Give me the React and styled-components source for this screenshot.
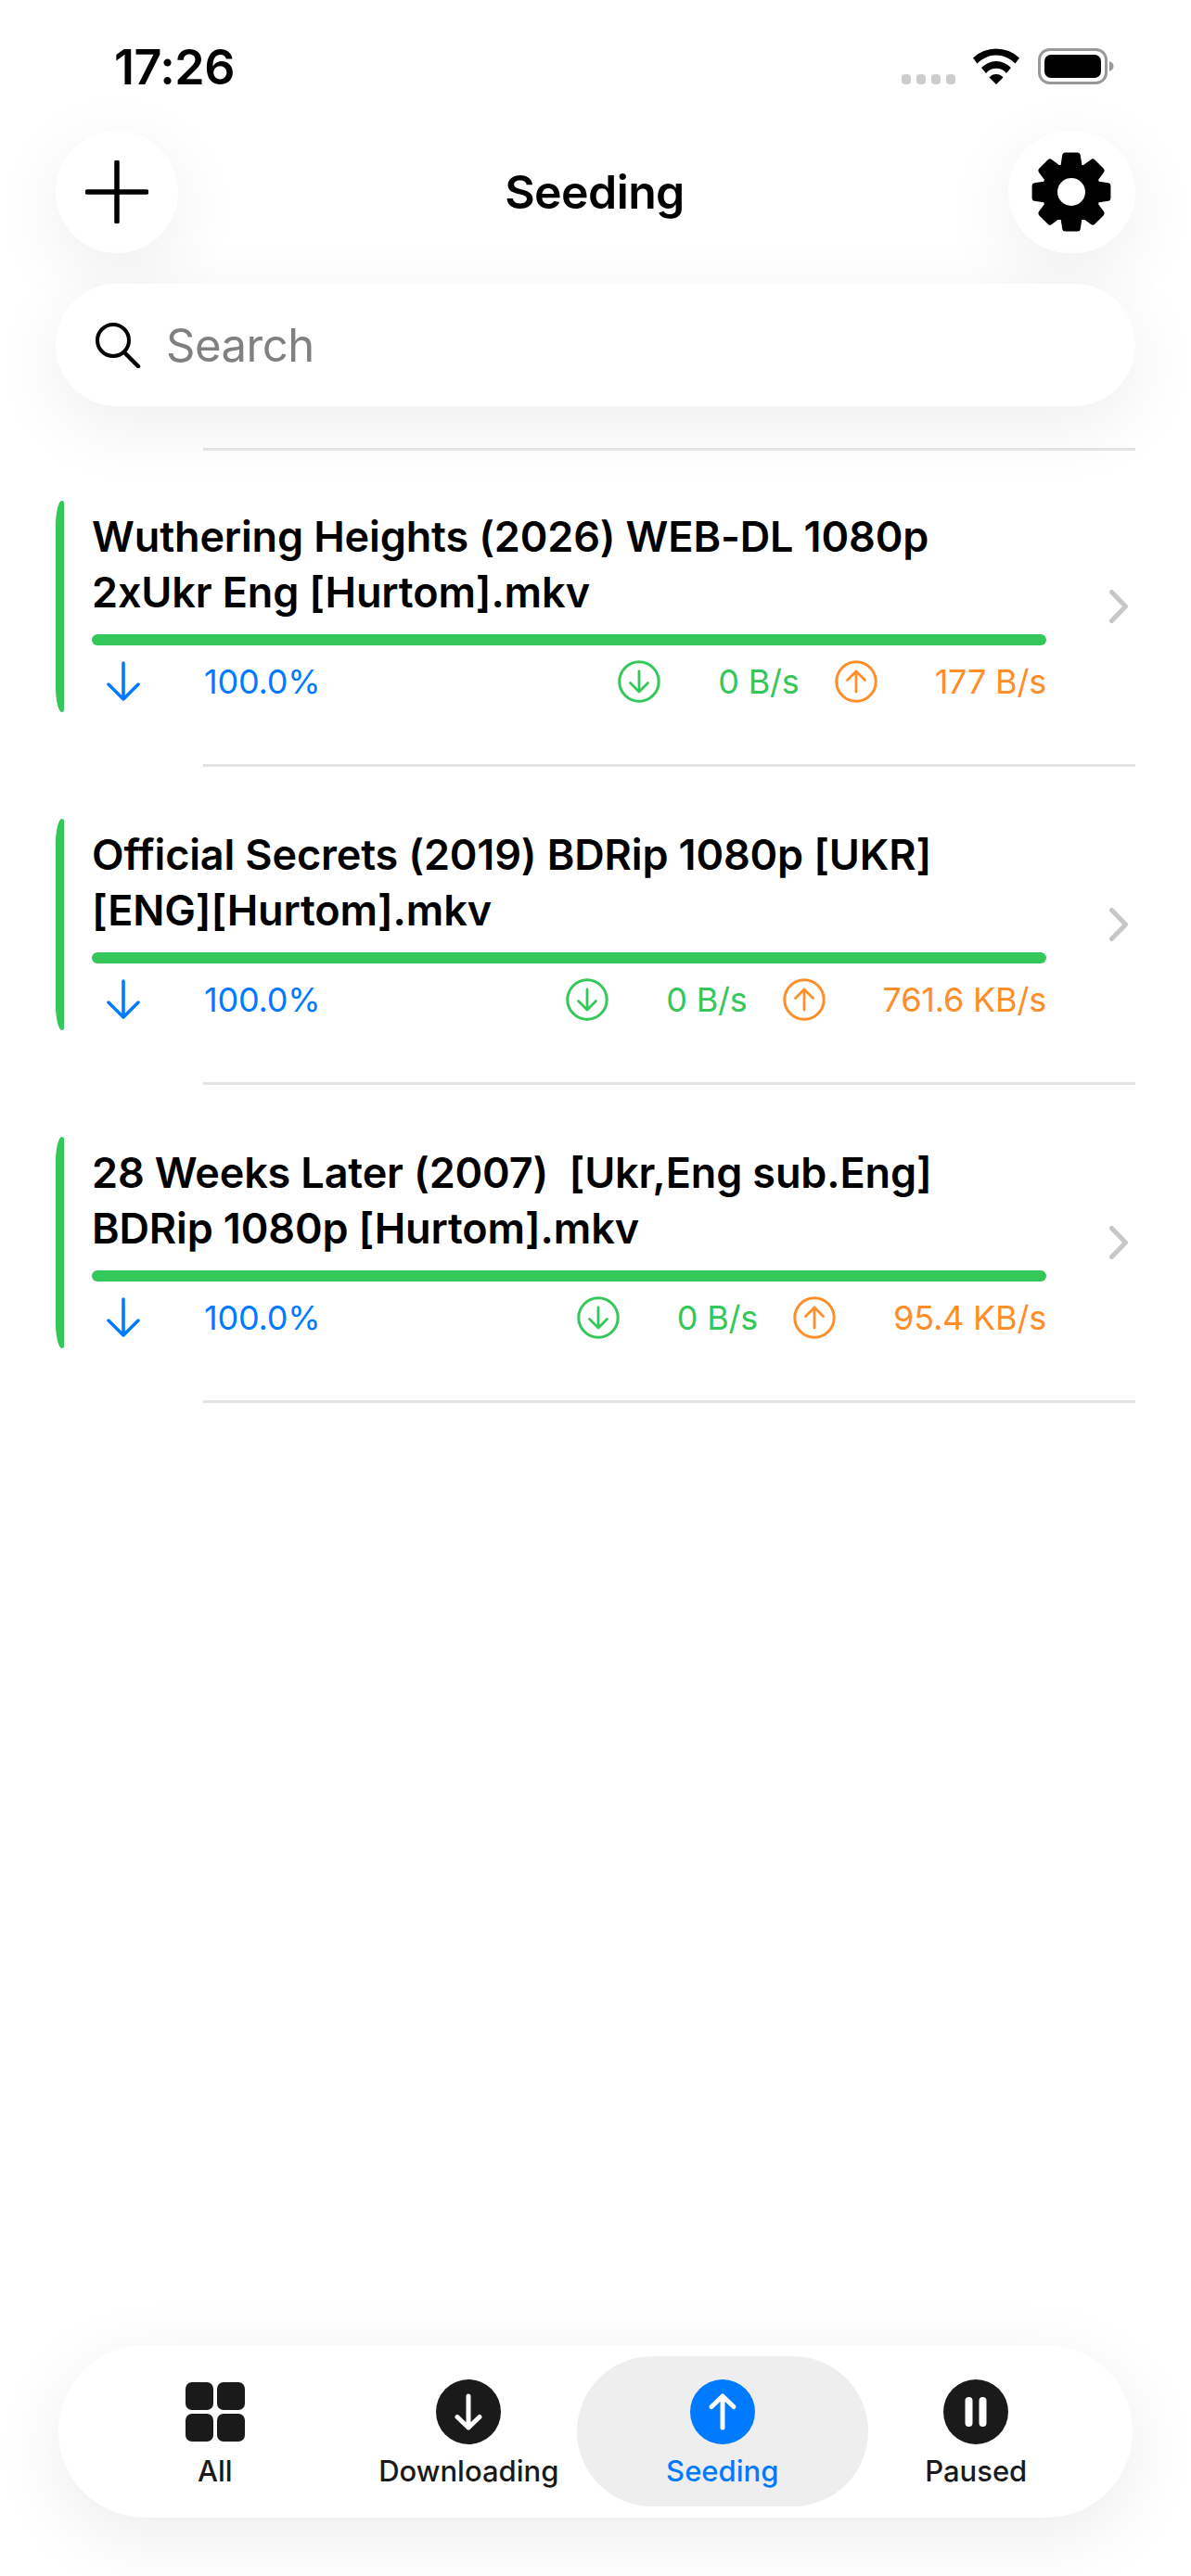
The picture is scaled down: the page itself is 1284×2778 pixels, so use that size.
import React from "react";
import styled, { createGlobalStyle } from "styled-components";

const torrents = [
  { title: "Wuthering Heights (2026) WEB-DL 1080p\n2xUkr Eng [Hurtom].mkv", down: "0 B/s", up: "177 B/s" },
  { title: "Official Secrets (2019) BDRip 1080p [UKR]\n[ENG][Hurtom].mkv", down: "0 B/s", up: "761.6 KB/s" },
  { title: "28 Weeks Later (2007)  [Ukr,Eng sub.Eng]\nBDRip 1080p [Hurtom].mkv", down: "0 B/s", up: "95.4 KB/s" },
];

// 8 teeth gear, outline worked out from angles
const gearPath = () => {
  const cx = 44, cy = 44, outer = 40, root = 29;
  const pts = [];
  for (let i = 0; i < 8; i++) {
    const a = (i * Math.PI) / 4 - Math.PI / 2;
    [[root, -0.3], [outer, -0.17], [outer, 0.17], [root, 0.3]].forEach(([r, d]) => {
      pts.push(`${(cx + r * Math.cos(a + d)).toFixed(2)} ${(cy + r * Math.sin(a + d)).toFixed(2)}`);
    });
  }
  return "M" + pts.join("L") + "Z";
};

const StatusIcons = () => (
  <svg width="232" height="40" viewBox="0 0 232 40">
    {[0, 16, 32, 48].map((x) => (
      <rect key={x} x={x} y="28" width="10" height="11" rx="4" fill="#cdcdcd" />
    ))}
    <path d="M77 10.5a36 36 0 0 1 50 0l-4.5 6a28 28 0 0 0-41 0zM86 21a22 22 0 0 1 32 0l-5 6a14 14 0 0 0-22 0zM94.5 31.5a10 10 0 0 1 15 0L102 39z" fill="#000" />
    <rect x="148.5" y="1.5" width="72" height="36" rx="11" fill="none" stroke="#999" strokeWidth="3" />
    <rect x="154" y="7" width="61" height="25" rx="7" fill="#000" />
    <path d="M224 14c3 1 4.500 3 4.500 5.500S227 24 224 25z" fill="#999" />
  </svg>
);

const PlusIcon = () => (
  <svg width="68" height="68" viewBox="0 0 68 68">
    <path d="M34 2v64M2 34h64" stroke="#000" strokeWidth="5.500" strokeLinecap="round" />
  </svg>
);

const GearIcon = () => (
  <svg width="88" height="88" viewBox="0 0 88 88">
    <path d={gearPath()} fill="#000" stroke="#000" strokeWidth="6" strokeLinejoin="round" />
    <circle cx="44" cy="44" r="15" fill="#fff" />
  </svg>
);

const SearchIcon = () => (
  <svg width="50" height="50" viewBox="0 0 50 50">
    <circle cx="20" cy="20" r="17" fill="none" stroke="#000" strokeWidth="4" />
    <path d="M32 33l15 15" stroke="#000" strokeWidth="4.500" strokeLinecap="round" />
  </svg>
);

const ArrowDown = () => (
  <svg width="36" height="44" viewBox="0 0 36 44">
    <path d="M18 2v39M2 25l16 16 16-16" fill="none" stroke="#007aff" strokeWidth="3.500" strokeLinecap="round" strokeLinejoin="round" />
  </svg>
);

const RingArrow = ({ color, up }) => (
  <svg width="46" height="46" viewBox="0 0 46 46">
    <circle cx="23" cy="23" r="21.200" fill="none" stroke={color} strokeWidth="3" />
    <path
      d={up ? "M23 34V12M13.500 21.500L23 12l9.500 9.500" : "M23 12v22M13.500 24.500L23 34l9.500-9.500"}
      fill="none"
      stroke={color}
      strokeWidth="2.800"
      strokeLinecap="round"
      strokeLinejoin="round"
    />
  </svg>
);

const Chevron = () => (
  <svg width="22" height="38" viewBox="0 0 22 38">
    <path d="M3.500 3.500L18.500 19 3.500 34.500" fill="none" stroke="#c7c7c9" strokeWidth="5" strokeLinecap="round" strokeLinejoin="round" />
  </svg>
);

const AllIcon = () => (
  <svg width="64" height="64" viewBox="0 0 64 64">
    {[[0, 0], [34, 0], [0, 34], [34, 34]].map(([x, y]) => (
      <rect key={`${x}-${y}`} x={x} y={y} width="30" height="30" rx="7" fill="#1a1a1a" />
    ))}
  </svg>
);

const DiscIcon = ({ color, children }) => (
  <svg width="70" height="70" viewBox="0 0 70 70">
    <circle cx="35" cy="35" r="35" fill={color} />
    {children}
  </svg>
);

const tabs = [
  { label: "All", icon: <AllIcon /> },
  {
    label: "Downloading",
    icon: (
      <DiscIcon color="#1a1a1a">
        <path d="M35 18v34M23 40.500L35 52l12-11.500" fill="none" stroke="#fff" strokeWidth="5" strokeLinecap="round" strokeLinejoin="round" />
      </DiscIcon>
    ),
  },
  {
    label: "Seeding",
    active: true,
    icon: (
      <DiscIcon color="#007aff">
        <path d="M35 52V18M23 29.500L35 18l12 11.500" fill="none" stroke="#fff" strokeWidth="5" strokeLinecap="round" strokeLinejoin="round" />
      </DiscIcon>
    ),
  },
  {
    label: "Paused",
    icon: (
      <DiscIcon color="#1a1a1a">
        <path d="M27.500 23v24M42.500 23v24" stroke="#fff" strokeWidth="8" strokeLinecap="round" />
      </DiscIcon>
    ),
  },
];

const App = () => (
  <>
    <GlobalStyle />
    <Page>
      <StatusBar>
        <Clock>17:26</Clock>
        <StatusIcons />
      </StatusBar>

      <NavRow>
        <RoundButton>
          <PlusIcon />
        </RoundButton>
        <NavTitle>Seeding</NavTitle>
        <RoundButton $wide>
          <GearIcon />
        </RoundButton>
      </NavRow>

      <SearchBar>
        <SearchIcon />
        <SearchText>Search</SearchText>
      </SearchBar>

      <TorrentList>
        <TopDivider />
        {torrents.map((t) => (
          <React.Fragment key={t.title}>
            <TorrentRow>
              <AccentBar />
              <RowBody>
                <Title>{t.title}</Title>
                <ProgressBar />
                <StatsRow>
                  <ArrowSlot>
                    <ArrowDown />
                  </ArrowSlot>
                  <Percent>100.0%</Percent>
                  <Speeds>
                    <RingArrow color="#34c759" />
                    <Speed $color="#34c759">{t.down}</Speed>
                    <UpIcon>
                      <RingArrow color="#ff8d28" up />
                    </UpIcon>
                    <Speed $color="#ff8d28">{t.up}</Speed>
                  </Speeds>
                </StatsRow>
              </RowBody>
              <ChevronSlot>
                <Chevron />
              </ChevronSlot>
            </TorrentRow>
            <Divider />
          </React.Fragment>
        ))}
      </TorrentList>

      <TabBar>
        {tabs.map((tab) => (
          <TabItem key={tab.label} $active={tab.active}>
            <TabIcon>{tab.icon}</TabIcon>
            <TabLabel $active={tab.active}>{tab.label}</TabLabel>
          </TabItem>
        ))}
      </TabBar>
    </Page>
  </>
);

const GlobalStyle = createGlobalStyle`
  html, body {
    margin: 0;
    padding: 0;
    background: #fff;
  }
  body {
    font-family: Inter, "Liberation Sans", sans-serif;
    color: #000;
  }
`;

const Page = styled.div`
  width: 1284px;
  height: 2778px;
  box-sizing: border-box;
  padding: 0 60px 63px;
  display: flex;
  flex-direction: column;
  background: #fff;
  overflow: hidden;
`;

const StatusBar = styled.div`
  height: 141px;
  flex: none;
  box-sizing: border-box;
  padding: 52px 20px 0 63px;
  display: flex;
  justify-content: space-between;
  align-items: flex-start;
`;

const Clock = styled.div`
  font-size: 52px;
  line-height: 42px;
  font-weight: 600;
  letter-spacing: -0.5px;
`;

const NavRow = styled.div`
  height: 132px;
  flex: none;
  display: flex;
  align-items: center;
  justify-content: space-between;
`;

const RoundButton = styled.div`
  width: ${(p) => (p.$wide ? "137px" : "132px")};
  height: 132px;
  border-radius: 66px;
  background: #fff;
  box-shadow: 0 20px 80px rgba(0, 0, 0, 0.07);
  display: flex;
  align-items: center;
  justify-content: center;
`;

const NavTitle = styled.div`
  margin-left: 3px;
  font-size: 50px;
  font-weight: 600;
  letter-spacing: -0.6px;
`;

const SearchBar = styled.div`
  height: 132px;
  flex: none;
  margin-top: 33px;
  padding-left: 42px;
  border-radius: 66px;
  background: #fff;
  box-shadow: 0 20px 80px rgba(0, 0, 0, 0.07);
  display: flex;
  align-items: center;
  gap: 27px;
`;

const SearchText = styled.div`
  font-size: 49px;
  color: #808080;
  letter-spacing: -0.5px;
`;

const TorrentList = styled.div`
  margin-top: 45px;
`;

const Divider = styled.div`
  height: 3px;
  margin-left: 159px;
  background: #e3e3e3;
`;

const TopDivider = styled(Divider)`
  margin-bottom: -2px;
`;

const TorrentRow = styled.div`
  height: 340px;
  box-sizing: border-box;
  padding-top: 56px;
  display: flex;
  align-items: flex-start;
`;

const AccentBar = styled.div`
  width: 9px;
  height: 228px;
  flex: none;
  background: #34c759;
  border-radius: 9px 3px 3px 9px / 36px 3px 3px 36px;
`;

const RowBody = styled.div`
  width: 1029px;
  flex: none;
  margin-left: 30px;
  padding-top: 9px;
`;

const Title = styled.div`
  font-size: 45px;
  line-height: 60px;
  font-weight: 600;
  letter-spacing: -0.15px;
  white-space: pre-wrap;
`;

const ProgressBar = styled.div`
  height: 12px;
  margin-top: 15px;
  border-radius: 6px;
  background: #34c759;
`;

const StatsRow = styled.div`
  height: 46px;
  margin-top: 16px;
  display: flex;
  align-items: center;
`;

const ArrowSlot = styled.div`
  width: 121px;
  padding-left: 16px;
  box-sizing: border-box;
  display: flex;
`;

const Percent = styled.div`
  font-size: 36px;
  color: #007aff;
  letter-spacing: -0.2px;
`;

const Speeds = styled.div`
  margin-left: auto;
  display: flex;
  align-items: center;
`;

const Speed = styled.div`
  margin-left: 62px;
  font-size: 36px;
  color: ${(p) => p.$color};
  letter-spacing: -0.2px;
`;

const UpIcon = styled.div`
  display: flex;
  margin-left: 38px;
`;

const ChevronSlot = styled.div`
  margin-left: 67px;
  height: 228px;
  display: flex;
  align-items: center;
`;

const TabBar = styled.div`
  margin-top: auto;
  margin-left: 3px;
  margin-right: 3px;
  height: 186px;
  box-sizing: border-box;
  padding: 12px 32px;
  display: grid;
  grid-template-columns: repeat(4, 1fr);
  border-radius: 93px;
  background: #fff;
  box-shadow: 0 20px 80px rgba(0, 0, 0, 0.08);
`;

const TabItem = styled.div`
  margin: 0 ${(p) => (p.$active ? "-20px" : "0")};
  padding-top: 25px;
  display: flex;
  flex-direction: column;
  align-items: center;
  border-radius: 81px;
  background: ${(p) => (p.$active ? "#eeeeee" : "transparent")};
`;

const TabIcon = styled.div`
  height: 70px;
  display: flex;
  align-items: center;
`;

const TabLabel = styled.div`
  margin-top: 10px;
  font-size: 31px;
  line-height: 38px;
  font-weight: 500;
  color: ${(p) => (p.$active ? "#007aff" : "#1a1a1a")};
`;

export default App;
